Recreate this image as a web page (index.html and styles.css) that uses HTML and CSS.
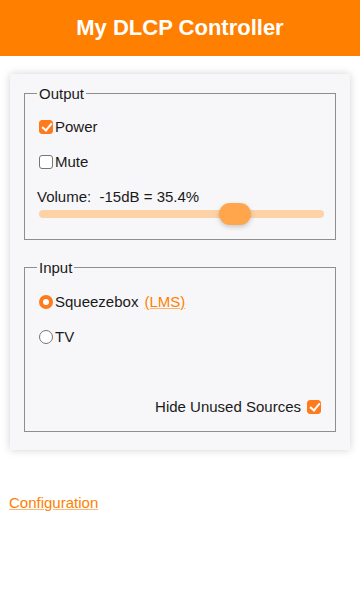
FILE: index.html
```html
<!DOCTYPE html>
<html lang="en">
<head>
    <meta charset="UTF-8">
    <meta name="viewport" content="width=device-width, initial-scale=1.0">
    <title>My DLCP Controller</title>
    <link rel="stylesheet" href="styles.css">
</head>
<body>
    <header class="topbar">
        <h1>My DLCP Controller</h1>
    </header>

    <div class="page">
        <div class="card">
            <fieldset class="group">
                <legend>Output</legend>
                <label class="option"><input type="checkbox" class="box" checked>Power</label>
                <label class="option"><input type="checkbox" class="box">Mute</label>
                <div class="volume-label">Volume:&nbsp; -15dB = 35.4%</div>
                <input type="range" class="volume" min="0" max="100" value="71">
            </fieldset>

            <fieldset class="group">
                <legend>Input</legend>
                <label class="option"><input type="radio" class="dot" name="source" checked>Squeezebox <a href="#" class="aux">(LMS)</a></label>
                <label class="option"><input type="radio" class="dot" name="source">TV</label>
                <label class="hide-unused">Hide Unused Sources <input type="checkbox" class="box" checked></label>
            </fieldset>
        </div>

        <a href="#" class="config-link">Configuration</a>
    </div>
</body>
</html>
```

FILE: styles.css
```css
/* General Styles */
:root {
    --accent: #ff8000;
    --check: #ff7a1c;
    --card-bg: #f7f7f9;
    --text: #1a1a1a;
    --border: #8e8e8e;
}

body {
    margin: 0;
    font-family: "Liberation Sans", Arial, sans-serif;
    font-size: 15px;
    color: var(--text);
    background: #fff;
}

.topbar {
    background-color: var(--accent);
    height: 56px;
    display: flex;
    align-items: center;
    justify-content: center;
}

.topbar h1 {
    margin: 0;
    color: #fff;
    font-size: 22px;
    font-weight: bold;
}

.page {
    padding: 18px 10px 20px 9px;
}

.card {
    background-color: var(--card-bg);
    box-shadow: 0 0 8px rgba(0, 0, 0, 0.18);
    padding: 11px 14px 18px 14px;
    margin-left: 1px;
}

.group {
    margin: 0 0 19px 0;
    padding: 7px 12px 15px 12px;
    border: 1px solid var(--border);
}

.group:last-child {
    margin-bottom: 0;
    padding-top: 8px;
    padding-bottom: 16px;
}

.group legend {
    padding: 0 2px;
    line-height: 17px;
}

.option {
    display: flex;
    align-items: center;
    height: 35px;
}

/* Checkbox and radio */
.box,
.dot {
    -webkit-appearance: none;
    appearance: none;
    position: relative;
    width: 14px;
    height: 14px;
    margin: 0 2px 0 2px;
    background: #fff;
    border: 1px solid #767676;
    flex: none;
}

.box {
    border-radius: 3px;
}

.box:checked {
    background: var(--check);
    border-color: var(--check);
}

.box:checked::after {
    content: "";
    position: absolute;
    left: 3.5px;
    top: 0.5px;
    width: 4px;
    height: 8px;
    border: solid #fff;
    border-width: 0 2px 2px 0;
    transform: rotate(40deg);
}

.dot {
    border-radius: 50%;
}

.dot:checked {
    border: 4px solid var(--check);
}

.aux {
    color: var(--accent);
    margin-left: 6px;
    text-decoration-color: rgba(255, 128, 0, 0.55);
}

.volume-label {
    margin-top: 9px;
    line-height: 17px;
    white-space: pre;
}

/* Volume slider */
.volume {
    -webkit-appearance: none;
    appearance: none;
    display: block;
    width: calc(100% - 1px);
    height: 20px;
    margin: -1px 0 0 2px;
    background: transparent;
}

.volume::-webkit-slider-runnable-track {
    height: 8px;
    border-radius: 4px;
    background: #fdd2a7;
}

.volume::-webkit-slider-thumb {
    -webkit-appearance: none;
    width: 32px;
    height: 22px;
    margin-top: -7px;
    border-radius: 11px;
    background: #ffa64d;
    box-shadow: 0 2px 5px rgba(0, 0, 0, 0.2);
}

.hide-unused {
    display: flex;
    justify-content: flex-end;
    align-items: center;
    line-height: 17px;
    margin-top: 44px;
}

.hide-unused .box {
    margin: 0 2px 0 6px;
}

.config-link {
    display: inline-block;
    margin-top: 44px;
    line-height: 17px;
    color: var(--accent);
    text-decoration-color: rgba(255, 128, 0, 0.55);
}
```
